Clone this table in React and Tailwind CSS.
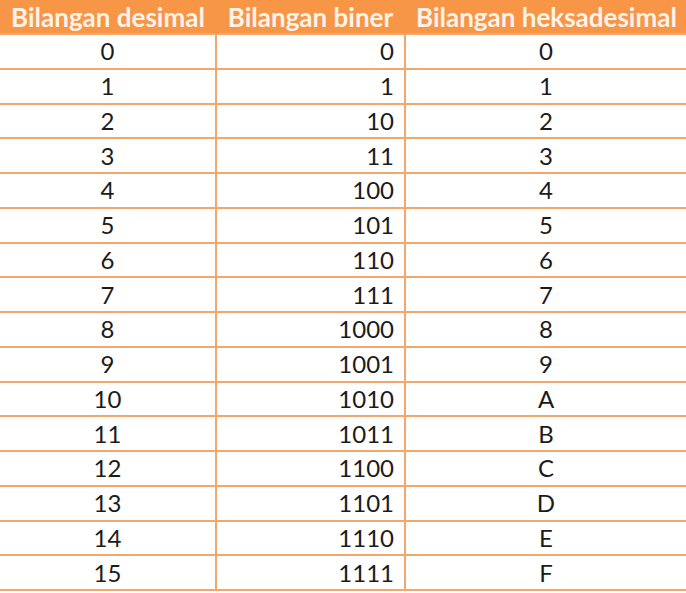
const rows = [
  ["0", "0", "0"],
  ["1", "1", "1"],
  ["2", "10", "2"],
  ["3", "11", "3"],
  ["4", "100", "4"],
  ["5", "101", "5"],
  ["6", "110", "6"],
  ["7", "111", "7"],
  ["8", "1000", "8"],
  ["9", "1001", "9"],
  ["10", "1010", "A"],
  ["11", "1011", "B"],
  ["12", "1100", "C"],
  ["13", "1101", "D"],
  ["14", "1110", "E"],
  ["15", "1111", "F"],
];

export default function App() {
  return (
    <div className="w-[686px] h-[593px] bg-white overflow-hidden font-['Lato',sans-serif] text-[#1b1b1b]">
      <table className="w-[690px] border-collapse table-fixed">
        <colgroup>
          <col className="w-[216px]" />
          <col className="w-[189px]" />
          <col className="w-[285px]" />
        </colgroup>
        <thead>
          <tr className="h-[34px] bg-[#f79646] text-[#fdf3ea]">
            <th className="text-[26px] font-bold text-center p-0 whitespace-nowrap leading-none">Bilangan desimal</th>
            <th className="text-[26px] font-bold text-center p-0 whitespace-nowrap leading-none">Bilangan biner</th>
            <th className="text-[26px] font-bold text-left pl-[11px] whitespace-nowrap leading-none">Bilangan heksadesimal</th>
          </tr>
        </thead>
        <tbody>
          {rows.map((r) => (
            <tr key={r[0]} className="h-[34.75px] text-[24px]">
              <td className="border-t-2 border-b-2 border-r-2 border-[#f4a76a] text-center p-0 leading-none">{r[0]}</td>
              <td className="border-2 border-[#f4a76a] text-right pr-[10px] leading-none">{r[1]}</td>
              <td className="border-t-2 border-b-2 border-l-2 border-[#f4a76a] text-center pr-[4px] leading-none">{r[2]}</td>
            </tr>
          ))}
        </tbody>
      </table>
    </div>
  );
}
